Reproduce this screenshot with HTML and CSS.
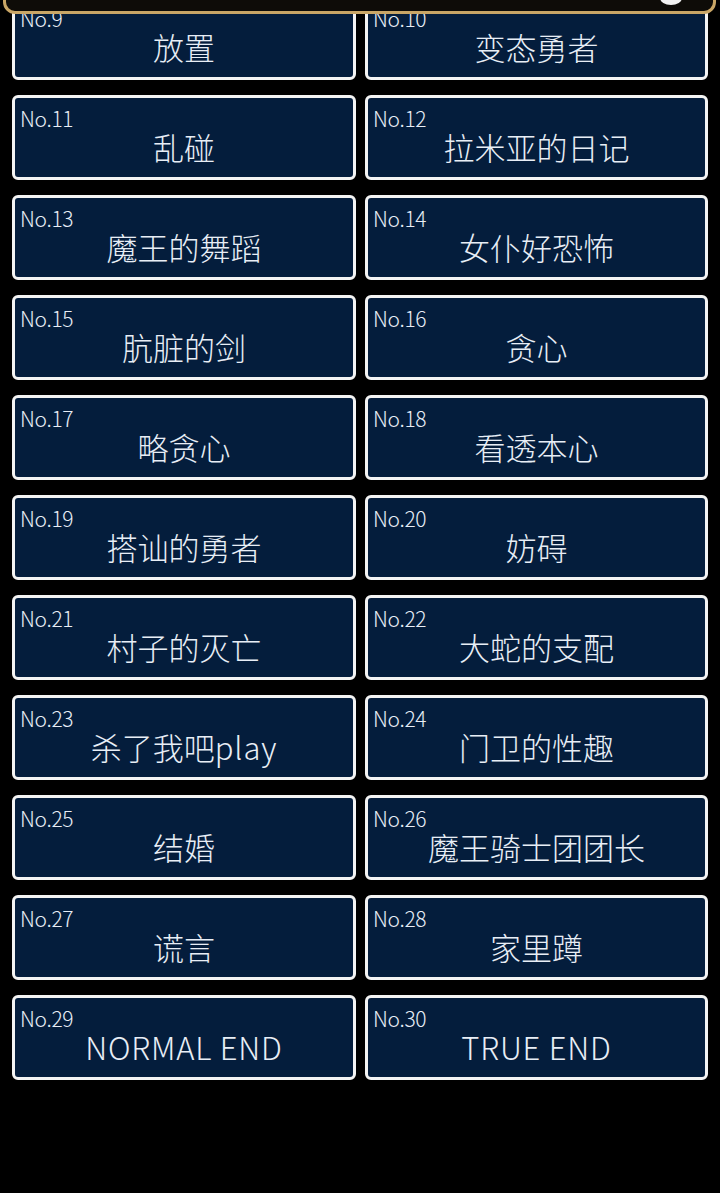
FILE: index.html
```html
<!DOCTYPE html>
<html lang="zh">
<head>
<meta charset="utf-8">
<link rel="stylesheet" href="styles.css">
</head>
<body>
<div class="topbar"><span class="knob"></span></div>
<div class="grid">
  <div class="card"><div class="num">No.9</div><div class="title">放置</div></div>
  <div class="card"><div class="num">No.10</div><div class="title">变态勇者</div></div>
  <div class="card"><div class="num">No.11</div><div class="title">乱碰</div></div>
  <div class="card"><div class="num">No.12</div><div class="title">拉米亚的日记</div></div>
  <div class="card"><div class="num">No.13</div><div class="title">魔王的舞蹈</div></div>
  <div class="card"><div class="num">No.14</div><div class="title">女仆好恐怖</div></div>
  <div class="card"><div class="num">No.15</div><div class="title">肮脏的剑</div></div>
  <div class="card"><div class="num">No.16</div><div class="title">贪心</div></div>
  <div class="card"><div class="num">No.17</div><div class="title">略贪心</div></div>
  <div class="card"><div class="num">No.18</div><div class="title">看透本心</div></div>
  <div class="card"><div class="num">No.19</div><div class="title">搭讪的勇者</div></div>
  <div class="card"><div class="num">No.20</div><div class="title">妨碍</div></div>
  <div class="card"><div class="num">No.21</div><div class="title">村子的灭亡</div></div>
  <div class="card"><div class="num">No.22</div><div class="title">大蛇的支配</div></div>
  <div class="card"><div class="num">No.23</div><div class="title">杀了我吧<span class="latin">play</span></div></div>
  <div class="card"><div class="num">No.24</div><div class="title">门卫的性趣</div></div>
  <div class="card"><div class="num">No.25</div><div class="title">结婚</div></div>
  <div class="card"><div class="num">No.26</div><div class="title">魔王骑士团团长</div></div>
  <div class="card"><div class="num">No.27</div><div class="title">谎言</div></div>
  <div class="card"><div class="num">No.28</div><div class="title">家里蹲</div></div>
  <div class="card"><div class="num">No.29</div><div class="title"><span class="latin">NORMAL END</span></div></div>
  <div class="card"><div class="num">No.30</div><div class="title"><span class="latin">TRUE END</span></div></div>
</div>
</body>
</html>
```
FILE: styles.css
```css
html, body {
  margin: 0;
  padding: 0;
  background: #000;
}
body {
  width: 720px;
  height: 1193px;
  overflow: hidden;
  position: relative;
  font-family: "Noto Sans CJK SC", "Noto Sans", sans-serif;
  color: #e8eef6;
}
.topbar {
  position: absolute;
  left: 3px;
  right: 4px;
  top: -40px;
  height: 48px;
  background: #0e0c08;
  border: 3px solid #c9a666;
  border-radius: 0 0 12px 12px;
  z-index: 2;
}
.knob {
  position: absolute;
  left: 654px;
  bottom: 6px;
  width: 22px;
  height: 14px;
  border-radius: 50%;
  background: #f2f2f2;
}
.grid {
  display: grid;
  grid-template-columns: 344px 343px;
  column-gap: 9px;
  row-gap: 15px;
  padding: 0 12px;
  margin-top: -5px;
}
.card {
  box-sizing: border-box;
  height: 85px;
  border: 3px solid #f4f4f4;
  border-radius: 6px;
  background: #041d3c;
  padding: 8px 5px 0 5px;
  display: flex;
  flex-direction: column;
}
.num {
  font-size: 21px;
  line-height: 24px;
  font-weight: 300;
  letter-spacing: -0.3px;
  color: #e8eef6;
}
.title {
  font-size: 31px;
  line-height: 36px;
  text-align: center;
  margin-top: -1px;
  font-weight: 300;
}
.latin {
  letter-spacing: 0.8px;
}
```
